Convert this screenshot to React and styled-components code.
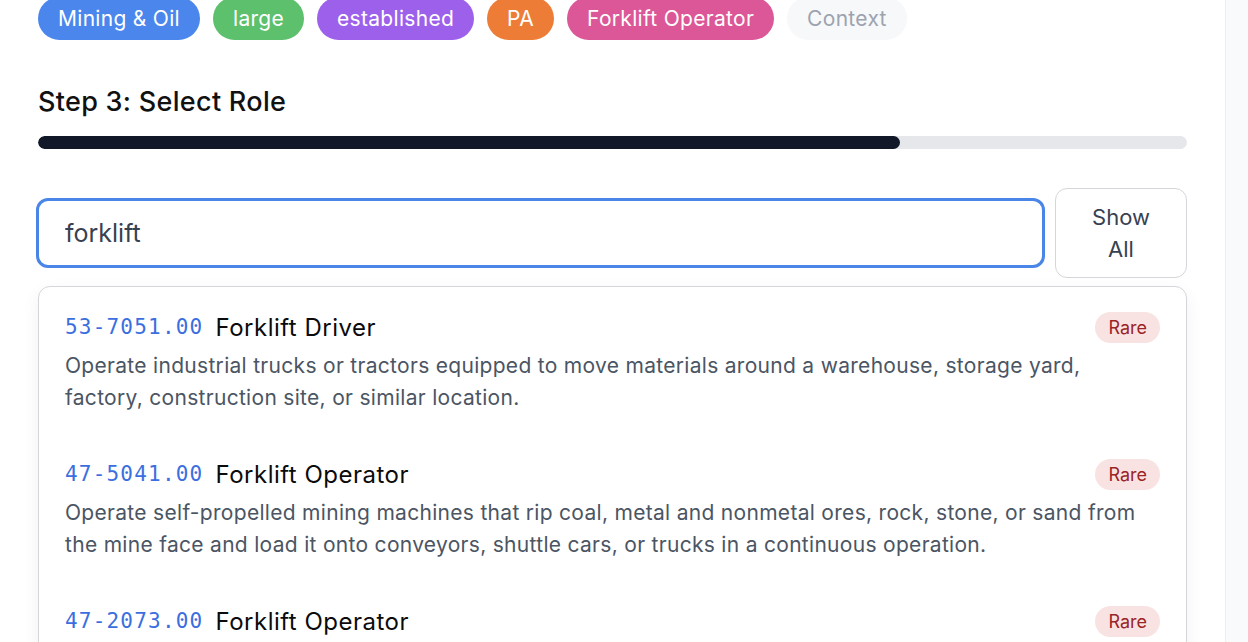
import React from 'react';
import styled, { createGlobalStyle } from 'styled-components';

const GlobalStyle = createGlobalStyle`
  html, body {
    margin: 0;
    padding: 0;
    height: 100%;
    overflow: hidden;
    background: #ffffff;
  }
  body {
    font-family: Inter, "Noto Sans", sans-serif;
    color: #111827;
  }
  * { box-sizing: border-box; }
`;

const Layout = styled.div`
  display: flex;
  width: 1248px;
  height: 642px;
  overflow: hidden;
`;

const Main = styled.main`
  width: 1226px;
  flex-shrink: 0;
  padding: 0 38px;
  background: #fff;
  border-right: 1px solid #eceef1;
`;

const Sidebar = styled.aside`
  flex: 1;
  background: #f9fafb;
`;

const TagRow = styled.div`
  display: flex;
  gap: 13px;
  margin-top: -3px;
`;

const Tag = styled.span`
  display: inline-flex;
  align-items: center;
  height: 43px;
  padding: 0 20px;
  border-radius: 999px;
  font-size: 21px;
  letter-spacing: 0.3px;
  background: ${(p) => p.bg};
  color: ${(p) => p.fg || '#fff'};
`;

const StepTitle = styled.h2`
  margin: 45px 0 0;
  font-size: 27px;
  font-weight: 450;
  letter-spacing: 0.3px;
  line-height: 34px;
  color: #111;
`;

const Track = styled.div`
  margin-top: 17px;
  height: 13px;
  border-radius: 7px;
  background: #e5e7eb;
  overflow: hidden;
`;

const Fill = styled.div`
  height: 100%;
  border-radius: 7px;
  background: #111827;
`;

const SearchRow = styled.div`
  display: flex;
  align-items: center;
  gap: 10px;
  margin-top: 39px;
`;

const SearchInput = styled.input`
  flex: 1;
  margin-left: -2px;
  height: 70px;
  border: 3px solid #4a86e8;
  border-radius: 12px;
  padding: 0 26px;
  font-family: Inter, "Noto Sans", sans-serif;
  font-size: 25px;
  color: #374151;
  outline: none;
`;

const ShowAllButton = styled.button`
  width: 132px;
  height: 90px;
  border: 1px solid #d4d6dc;
  border-radius: 12px;
  background: #fff;
  font-family: Inter, "Noto Sans", sans-serif;
  font-size: 22px;
  line-height: 32px;
  color: #374151;
`;

const ResultList = styled.div`
  margin-top: 8px;
  border: 1px solid #d4d6dc;
  border-radius: 12px;
  background: #fff;
  box-shadow: 0 6px 18px rgba(17, 24, 39, 0.06);
`;

const ResultItem = styled.div`
  padding: 24px 26px 20px;
`;

const ResultHead = styled.div`
  display: flex;
  align-items: center;
  height: 32px;
`;

const Code = styled.span`
  font-family: "DejaVu Sans Mono", "Liberation Mono", monospace;
  font-size: 21px;
  letter-spacing: 1.2px;
  color: #3b6fe0;
  margin-right: 12px;
`;

const Title = styled.span`
  font-size: 24px;
  letter-spacing: 0.5px;
  color: #0b0b0b;
  flex: 1;
`;

const Badge = styled.span`
  display: inline-flex;
  align-items: center;
  height: 31px;
  padding: 0 13px;
  border-radius: 999px;
  background: #f9e2e2;
  color: #9b2424;
  font-size: 18px;
`;

const Description = styled.p`
  margin: 7px 0 0;
  font-size: 21px;
  letter-spacing: 0.3px;
  line-height: 32px;
  color: #4b5563;
`;

const tags = [
  { label: 'Mining & Oil', bg: '#4a86ec' },
  { label: 'large', bg: '#5cc06c' },
  { label: 'established', bg: '#9d60eb' },
  { label: 'PA', bg: '#ed7d36' },
  { label: 'Forklift Operator', bg: '#dc5797' },
  { label: 'Context', bg: '#f7f8fa', fg: '#9ca3af' },
];

const results = [
  {
    code: '53-7051.00',
    title: 'Forklift Driver',
    desc: 'Operate industrial trucks or tractors equipped to move materials around a warehouse, storage yard, factory, construction site, or similar location.',
  },
  {
    code: '47-5041.00',
    title: 'Forklift Operator',
    desc: 'Operate self-propelled mining machines that rip coal, metal and nonmetal ores, rock, stone, or sand from the mine face and load it onto conveyors, shuttle cars, or trucks in a continuous operation.',
  },
  {
    code: '47-2073.00',
    title: 'Forklift Operator',
    desc: 'Operate one or several types of power construction equipment, such as motor graders, bulldozers, scrapers, compressors, pumps, derricks, shovels, tractors, or front-end loaders.',
  },
];

const App = () => {
  const progress = 75;
  return (
    <Layout>
      <GlobalStyle />
      <Main>
        <TagRow>
          {tags.map((t) => (
            <Tag key={t.label} bg={t.bg} fg={t.fg}>{t.label}</Tag>
          ))}
        </TagRow>
        <StepTitle>Step 3: Select Role</StepTitle>
        <Track>
          <Fill style={{ width: `${progress}%` }} />
        </Track>
        <SearchRow>
          <SearchInput defaultValue="forklift" />
          <ShowAllButton>Show<br />All</ShowAllButton>
        </SearchRow>
        <ResultList>
          {results.map((r) => (
            <ResultItem key={r.code}>
              <ResultHead>
                <Code>{r.code}</Code>
                <Title>{r.title}</Title>
                <Badge>Rare</Badge>
              </ResultHead>
              <Description>{r.desc}</Description>
            </ResultItem>
          ))}
        </ResultList>
      </Main>
      <Sidebar />
    </Layout>
  );
};

export default App;
